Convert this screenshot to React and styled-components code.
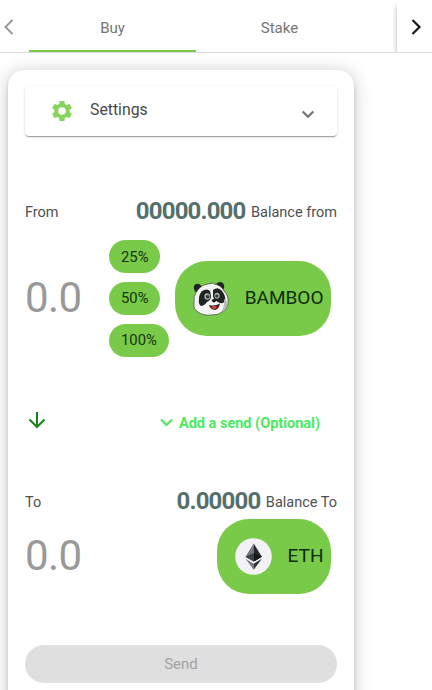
import React from "react";
import styled, { createGlobalStyle } from "styled-components";

const Global = createGlobalStyle`
  * { box-sizing: border-box; }
  html, body { margin: 0; background: #fff; }
  body { font-family: Roboto, sans-serif; color: #4a4a4a; overflow: hidden; }
  button { font-family: inherit; border: 0; padding: 0; margin: 0; white-space: nowrap; }
`;

const Page = styled.div`
  width: 432px;
  height: 690px;
  overflow: hidden;
`;

const TabBar = styled.nav`
  display: flex;
  height: 53px;
  background: #fff;
  border-bottom: 1px solid #dcdcdc;
  overflow: hidden;
`;

const Pager = styled.button`
  width: ${(p) => (p.$raised ? "35px" : "29px")};
  margin-left: ${(p) => (p.$raised ? "auto" : "0")};
  padding-left: ${(p) => (p.$raised ? "14px" : "4px")};
  padding-top: 2px;
  background: #fff;
  display: flex;
  align-items: center;
  color: ${(p) => (p.$raised ? "#1c1c1c" : "#999")};
  box-shadow: ${(p) => (p.$raised ? "0 6px 5px rgba(0,0,0,.3)" : "none")};
`;

const Tab = styled.button`
  width: 167px;
  padding-top: 6px;
  background: transparent;
  font-size: 15px;
  font-weight: 400;
  color: #757575;
  border-bottom: 2px solid ${(p) => (p.$active ? "#79ca48" : "transparent")};
`;

const Card = styled.main`
  width: 346px;
  height: 660px;
  margin: 17px 0 0 8px;
  padding: 16px 17px;
  background: #fff;
  border-radius: 16px;
  box-shadow: 0 3px 5px -1px rgba(0,0,0,.2), 0 2px 18px rgba(0,0,0,.22);
  display: flex;
  flex-direction: column;
`;

const Settings = styled.section`
  height: 50px;
  flex: none;
  display: flex;
  align-items: center;
  padding: 0 22px 0 26px;
  border-radius: 4px;
  box-shadow: 0 2px 1px -1px rgba(0,0,0,.22), 0 1px 1px rgba(0,0,0,.12), 0 1px 3px rgba(0,0,0,.14);
  svg:first-child { margin-right: 17px; }
  svg:last-child { margin-left: auto; margin-top: 6px; }
`;

const SettingsLabel = styled.span`
  font-size: 15.8px;
  line-height: 20px;
  margin-bottom: 2px;
  color: #484848;
`;

const BalanceRow = styled.div`
  height: 28px;
  flex: none;
  margin-top: ${(p) => p.$top}px;
  display: flex;
  align-items: center;
  font-size: 14.5px;
  line-height: 28px;
  color: #505050;
`;

const BalanceLabel = styled.span`
  padding-top: 3px;
`;

const Balance = styled.strong`
  margin-left: auto;
  margin-right: 5.5px;
  font-size: 24px;
  font-weight: 700;
  letter-spacing: -0.83px;
  color: #55706c;
`;

const AmountRow = styled.div`
  height: ${(p) => p.$height}px;
  flex: none;
  display: flex;
  align-items: center;
  padding-right: 6px;
`;

const Amount = styled.span`
  width: 84px;
  padding-bottom: 2px;
  font-size: 42px;
  font-weight: 400;
  letter-spacing: -0.6px;
  line-height: 48px;
  color: #999;
`;

const Percentages = styled.div`
  display: flex;
  flex-direction: column;
  align-items: flex-start;
  gap: 8.4px;
`;

const Percent = styled.button`
  height: 33.3px;
  padding: 0 12px;
  border-radius: 17px;
  background: #79ca48;
  font-size: 14.8px;
  color: #17330c;
  font-weight: 400;
`;

const Token = styled.button`
  height: 74.5px;
  width: ${(p) => p.$width}px;
  margin-left: auto;
  padding: 0 7.5px 0 18.5px;
  border-radius: 32px;
  background: #79ca48;
  display: flex;
  align-items: center;
  justify-content: space-between;
  font-size: 19px;
  color: #102b08;
`;

const TokenName = styled.span`
  padding-bottom: 2px;
`;

const SendOption = styled.div`
  height: 24px;
  flex: none;
  margin-top: 36px;
  padding-right: 17px;
  display: flex;
  align-items: center;
  justify-content: space-between;
`;

const OptionalButton = styled.button`
  display: flex;
  align-items: center;
  gap: 6px;
  background: transparent;
  color: #4bea60;
  font-size: 14.6px;
  font-weight: 700;
  letter-spacing: -0.05px;
  padding-top: 5px;
`;

const Send = styled.button`
  height: 38px;
  flex: none;
  margin-top: 47px;
  border-radius: 19px;
  background: #dfdfdf;
  color: #a3a3a3;
  font-size: 15px;
  font-weight: 400;
`;

const Chevron = ({ w, h, d, stroke = 2, color = "currentColor" }) => (
  <svg width={w} height={h} viewBox={`0 0 ${w} ${h}`} fill="none" stroke={color} strokeWidth={stroke}>
    <path d={d} />
  </svg>
);

const Gear = () => (
  <svg width="22" height="22" viewBox="1.5 1.5 21 21" fill="#87d45d">
    <path d="M19.14 12.94c.04-.3.06-.61.06-.94s-.02-.64-.07-.94l2.03-1.58c.18-.14.23-.41.12-.61l-1.92-3.32c-.12-.22-.37-.29-.59-.22l-2.39.96c-.5-.38-1.03-.7-1.62-.94L14.4 2.81A.48.48 0 0 0 13.92 2.4h-3.84c-.24 0-.43.17-.47.41l-.36 2.54c-.59.24-1.13.57-1.62.94l-2.39-.96c-.22-.08-.47 0-.59.22L2.74 8.87c-.12.21-.08.47.12.61l2.03 1.58c-.05.3-.09.63-.09.94s.02.64.07.94l-2.03 1.58c-.18.14-.23.41-.12.61l1.92 3.32c.12.22.37.29.59.22l2.39-.96c.5.38 1.03.7 1.62.94l.36 2.54c.05.24.24.41.48.41h3.84c.24 0 .44-.17.47-.41l.36-2.54c.59-.24 1.13-.56 1.62-.94l2.39.96c.22.08.47 0 .59-.22l1.92-3.32c.12-.22.07-.47-.12-.61zM12 15.6A3.6 3.6 0 1 1 12 8.4a3.6 3.6 0 0 1 0 7.2z" />
  </svg>
);

const Panda = () => (
  <svg width="36" height="36" viewBox="0 0 36 36">
    <ellipse cx="5" cy="7.5" rx="4" ry="5" fill="#202322" transform="rotate(-25 5 7.5)" />
    <ellipse cx="27" cy="5.5" rx="4.2" ry="4.5" fill="#202322" />
    <path d="M4 10Q8 4 15 3l5-1 1 1q7 1 10 7 5 4 4 13-1 6-6 8-3 3-10 3Q10 35 5 31q-5-3-4-9Q0 15 4 10z" fill="#f4f5f3" stroke="#3a3e38" strokeWidth=".7" />
    <path d="M9 10q5-3 8 0l1 5q0 4-4 6-3 4-6 4-3-2-2-7 0-5 3-8z" fill="#202524" />
    <path d="M20 9q5-4 9 1 4 5 3 10-2 3-5 2-5-2-7-6z" fill="#202524" />
    <ellipse cx="14.2" cy="15.5" rx="2.8" ry="3.3" fill="#a9b1ab" />
    <ellipse cx="24" cy="14.8" rx="2.6" ry="3" fill="#a9b1ab" />
    <circle cx="14.6" cy="15.7" r="1.8" fill="#293a32" />
    <circle cx="23.8" cy="15" r="1.6" fill="#293a32" />
    <path d="M18.5 19q3-2 5 0-1 2.5-2.8 2.5-1.8-.7-2.2-2.5z" fill="#161918" />
    <path d="M16 24q6 1.5 11-1.5-1 5.500-5 6.500-5-.5-6-5z" fill="#342020" />
    <path d="M18 26q3-2 6-.3l-1 1.800q-3 1.500-5-1.500z" fill="#e23d43" />
    <path d="M31 18q4 2 3 7-2 5-6 6 4-6 3-13z" fill="#b8bbb9" />
  </svg>
);

const Ether = () => (
  <svg width="37" height="37" viewBox="0 0 37 37">
    <circle cx="18.5" cy="18.5" r="18.3" fill="#f1f1f6" />
    <path d="M18.700 5.500 10.500 18.800l8.200 4.800z" fill="#74777b" />
    <path d="m18.700 5.500 8.200 13.300-8.200 4.800z" fill="#282b2e" />
    <path d="m10.500 18.800 8.200-3.800v8.600z" fill="#3d4044" />
    <path d="m26.900 18.800-8.200-3.800v8.600z" fill="#131619" />
    <path d="m10.500 20.800 8.200 10.900v-6z" fill="#77797d" />
    <path d="m26.900 20.800-8.200 10.900v-6z" fill="#303236" />
  </svg>
);

export default function App() {
  return (
    <Page>
      <Global />
      <TabBar>
        <Pager aria-label="Previous tab">
          <Chevron w={10} h={16} d="M8.5 1 1.5 8l7 7" />
        </Pager>
        <Tab $active>Buy</Tab>
        <Tab>Stake</Tab>
        <Pager $raised aria-label="Next tab">
          <Chevron w={11} h={16} d="M1.5 1l7 7-7 7" stroke={2.2} />
        </Pager>
      </TabBar>
      <Card>
        <Settings>
          <Gear />
          <SettingsLabel>Settings</SettingsLabel>
          <Chevron w={14} h={9} d="m1.7 1.5 5.3 5.3 5.3-5.3" stroke={2.2} color="#757575" />
        </Settings>
        <BalanceRow $top={61}>
          <BalanceLabel>From</BalanceLabel>
          <Balance>00000.000</Balance>
          <BalanceLabel>Balance from</BalanceLabel>
        </BalanceRow>
        <AmountRow $height={147}>
          <Amount>0.0</Amount>
          <Percentages>
            <Percent>25%</Percent>
            <Percent>50%</Percent>
            <Percent>100%</Percent>
          </Percentages>
          <Token $width={156.5}><Panda /><TokenName>BAMBOO</TokenName></Token>
        </AmountRow>
        <SendOption>
          <svg width="24" height="24" viewBox="0 0 24 24" fill="none" stroke="#16831e" strokeWidth="2">
            <path d="M12 4v15M4.5 11.5 12 19l7.5-7.5" />
          </svg>
          <OptionalButton>
            <Chevron w={13} h={9} d="m1 1.5 5.5 5.5L12 1.5" stroke={2.2} />
            Add a send (Optional)
          </OptionalButton>
        </SendOption>
        <BalanceRow $top={55}>
          <BalanceLabel>To</BalanceLabel>
          <Balance>0.00000</Balance>
          <BalanceLabel>Balance To</BalanceLabel>
        </BalanceRow>
        <AmountRow $height={83}>
          <Amount>0.0</Amount>
          <Token $width={114.5}><Ether /><TokenName>ETH</TokenName></Token>
        </AmountRow>
        <Send>Send</Send>
      </Card>
    </Page>
  );
}
